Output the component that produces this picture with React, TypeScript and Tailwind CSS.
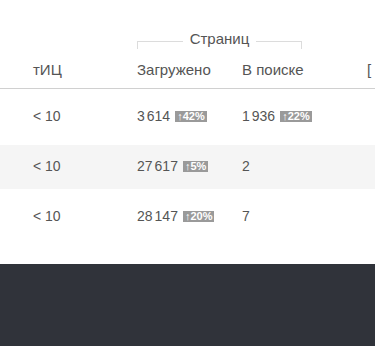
import React from "react";

const rows = [
  { tic: "< 10", loaded: ["3", "614"], lb: "42%", search: ["1", "936"], sb: "22%", bg: false },
  { tic: "< 10", loaded: ["27", "617"], lb: "5%", search: ["2"], sb: null, bg: true },
  { tic: "< 10", loaded: ["28", "147"], lb: "20%", search: ["7"], sb: null, bg: false },
];

function Num({ parts }: { parts: string[] }) {
  return (
    <span className="inline-flex">
      {parts.map((p, i) => (
        <span key={i} className={i > 0 ? "ml-[2px]" : ""}>
          {p}
        </span>
      ))}
    </span>
  );
}

function Badge({ v }: { v: string }) {
  return (
    <span className="ml-[5px] inline-flex h-[11px] items-center bg-[#9a9a9a] px-[2px] text-[11px] font-bold leading-[11px] text-white">
      <span className="font-normal">↑</span>
      {v}
    </span>
  );
}

export default function App() {
  return (
    <div
      className="w-[375px] h-[346px] bg-white flex flex-col text-[#555]"
      style={{ fontFamily: '"Liberation Sans", Arial, sans-serif' }}
    >
      <div className="pt-[30px] pl-[137px]">
        <div className="flex w-[165px] items-start">
          <div className="flex-1 mt-[11px] h-[8px] border-l border-t border-[#dcdcdc]" />
          <div className="px-[7px] text-[15px] leading-[17px]">Страниц</div>
          <div className="flex-1 mt-[11px] h-[8px] border-r border-t border-[#dcdcdc]" />
        </div>
      </div>
      <div className="mt-[12px] grid grid-cols-[104px_105px_125px_1fr] pl-[33px] pb-[10px] text-[15px] leading-[17px] border-b border-[#d0d0d0]">
        <div>тИЦ</div>
        <div>Загружено</div>
        <div>В поиске</div>
        <div>[</div>
      </div>
      <div className="flex flex-col gap-[6px] pt-[6px]">
        {rows.map((r, i) => (
          <div
            key={i}
            className={`grid h-[44px] grid-cols-[104px_105px_125px_1fr] items-center pl-[33px] pb-[2px] text-[14px] leading-[16px] text-[#555] ${r.bg ? "bg-[#f5f5f5]" : ""}`}
          >
            <div>{r.tic}</div>
            <div className="flex items-center">
              <Num parts={r.loaded} />
              <Badge v={r.lb} />
            </div>
            <div className="flex items-center">
              <Num parts={r.search} />
              {r.sb && <Badge v={r.sb} />}
            </div>
            <div />
          </div>
        ))}
      </div>
      <div className="flex-1" />
      <div className="h-[82px] bg-[#30333a]" />
    </div>
  );
}
